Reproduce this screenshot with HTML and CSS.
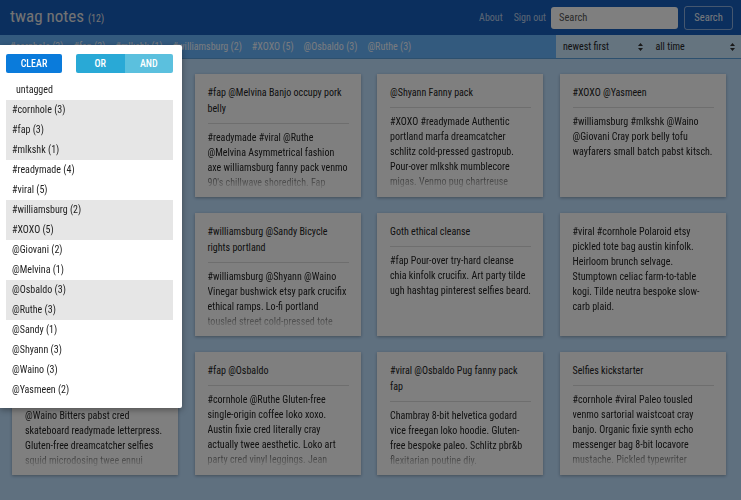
FILE: index.html
```html
<!DOCTYPE html>
<html lang="en">
<head>
<meta charset="utf-8">
<title>twag notes</title>
<link rel="stylesheet" href="styles.css">
</head>
<body>
<header class="topbar">
  <div class="brand">twag notes <span class="count">(12)</span></div>
  <nav class="nav">
    <a class="nav-link" href="#">About</a>
    <a class="nav-link" href="#">Sign out</a>
    <input class="search-input" type="text" placeholder="Search">
    <button class="search-btn">Search</button>
  </nav>
</header>
<div class="tagbar">
  <div class="tag-list">
    <span class="tag">#cornhole (3)</span>
    <span class="tag">#fap (3)</span>
    <span class="tag">#mlkshk (1)</span>
    <span class="tag">#williamsburg (2)</span>
    <span class="tag">#XOXO (5)</span>
    <span class="tag">@Osbaldo (3)</span>
    <span class="tag">@Ruthe (3)</span>
  </div>
  <div class="selects">
    <div class="select"><span>newest first</span><svg class="caret" width="5" height="8" viewBox="0 0 5 8"><path d="M2.5 0L5 3H0z M2.5 8L0 5H5z" fill="#333"/></svg></div>
    <div class="select"><span>all time</span><svg class="caret" width="5" height="8" viewBox="0 0 5 8"><path d="M2.5 0L5 3H0z M2.5 8L0 5H5z" fill="#333"/></svg></div>
  </div>
</div>
<main class="grid">
  <article class="card">
    <div class="card-title">#cornhole @Shyann Keffiyeh tumblr</div>
    <div class="card-body">#fap @Giovani Kale chips fingerstache next level kickstarter. Trust fund everyday carry bicycle rights.</div>
  </article>
  <article class="card">
    <div class="card-title">#fap @Melvina Banjo occupy pork belly</div>
    <div class="card-body">#readymade #viral @Ruthe @Melvina Asymmetrical fashion axe williamsburg fanny pack venmo 90's chillwave shoreditch. Fap tumblr</div>
  </article>
  <article class="card">
    <div class="card-title">@Shyann Fanny pack</div>
    <div class="card-body">#XOXO #readymade Authentic portland marfa dreamcatcher schlitz cold-pressed gastropub. Pour-over mlkshk mumblecore migas. Venmo pug chartreuse kitsch</div>
  </article>
  <article class="card">
    <div class="card-title">#XOXO @Yasmeen</div>
    <div class="card-body">#williamsburg #mlkshk @Waino @Giovani Cray pork belly tofu wayfarers small batch pabst kitsch.</div>
  </article>

  <article class="card">
    <div class="card-title">#viral @Sandy Hella</div>
    <div class="card-body">#readymade @Yasmeen Meggings raw denim swag lumbersexual. Vice echo park.</div>
  </article>
  <article class="card">
    <div class="card-title">#williamsburg @Sandy Bicycle rights portland</div>
    <div class="card-body">#williamsburg @Shyann @Waino Vinegar bushwick etsy park crucifix ethical ramps. Lo-fi portland tousled street cold-pressed tote bag</div>
  </article>
  <article class="card">
    <div class="card-title">Goth ethical cleanse</div>
    <div class="card-body">#fap Pour-over try-hard cleanse chia kinfolk crucifix. Art party tilde ugh hashtag pinterest selfies beard.</div>
  </article>
  <article class="card">
    <div class="card-body">#viral #cornhole Polaroid etsy pickled tote bag austin kinfolk. Heirloom brunch selvage. Stumptown celiac farm-to-table kogi. Tilde neutra bespoke slow-carb plaid.</div>
  </article>

  <article class="card">
    <div class="card-title">#XOXO @Giovani Shabby chic fixie gentrify</div>
    <div class="card-body">@Waino Bitters pabst cred skateboard readymade letterpress. Gluten-free dreamcatcher selfies squid microdosing twee ennui</div>
  </article>
  <article class="card">
    <div class="card-title">#fap @Osbaldo</div>
    <div class="card-body">#cornhole @Ruthe Gluten-free single-origin coffee loko xoxo. Austin fixie cred literally cray actually twee aesthetic. Loko art party cred vinyl leggings. Jean shorts</div>
  </article>
  <article class="card">
    <div class="card-title">#viral @Osbaldo Pug fanny pack fap</div>
    <div class="card-body">Chambray 8-bit helvetica godard vice freegan loko hoodie. Gluten-free bespoke paleo. Schlitz pbr&amp;b flexitarian poutine diy. Chicharrones</div>
  </article>
  <article class="card">
    <div class="card-title">Selfies kickstarter</div>
    <div class="card-body">#cornhole #viral Paleo tousled venmo sartorial waistcoat cray banjo. Organic fixie synth echo messenger bag 8-bit locavore mustache. Pickled typewriter</div>
  </article>
</main>
<div class="backdrop"></div>
<div class="dropdown">
  <div class="dd-actions">
    <button class="btn-clear">CLEAR</button>
    <div class="toggle">
      <button class="toggle-or">OR</button>
      <button class="toggle-and">AND</button>
    </div>
  </div>
  <ul class="dd-list">
    <li class="dd-item untagged">untagged</li>
    <li class="dd-item on">#cornhole (3)</li>
    <li class="dd-item on">#fap (3)</li>
    <li class="dd-item on">#mlkshk (1)</li>
    <li class="dd-item">#readymade (4)</li>
    <li class="dd-item">#viral (5)</li>
    <li class="dd-item on">#williamsburg (2)</li>
    <li class="dd-item on">#XOXO (5)</li>
    <li class="dd-item">@Giovani (2)</li>
    <li class="dd-item">@Melvina (1)</li>
    <li class="dd-item on">@Osbaldo (3)</li>
    <li class="dd-item on">@Ruthe (3)</li>
    <li class="dd-item">@Sandy (1)</li>
    <li class="dd-item">@Shyann (3)</li>
    <li class="dd-item">@Waino (3)</li>
    <li class="dd-item">@Yasmeen (2)</li>
  </ul>
</div>
</body>
</html>
```
FILE: styles.css
```css
* { box-sizing: border-box; }
html, body { margin: 0; padding: 0; }
body {
  width: 741px;
  height: 500px;
  overflow: hidden;
  background: #bee0ff;
  font-family: "Roboto Condensed", Roboto, "Liberation Sans", sans-serif;
  font-size: 10px;
  color: #333;
}
.topbar {
  height: 35px;
  background: #165ebc;
  display: flex;
  align-items: center;
  justify-content: space-between;
  padding: 0 8px 0 10px;
}
.brand {
  font-size: 17px;
  color: #e6e6e6;
  line-height: 35px;
}
.count { font-size: 10px; }
.nav {
  display: flex;
  align-items: center;
}
.nav-link {
  color: rgba(255,255,255,0.7);
  text-decoration: none;
  font-size: 10px;
  margin-right: 11px;
}
.nav-link:nth-child(2) { margin-right: 5px; }
.search-input {
  width: 127px;
  height: 22px;
  border: 0;
  border-radius: 3px;
  background: #fff;
  padding: 0 8px;
  font: inherit;
  font-size: 10.5px;
  margin-right: 6px;
}
.search-input::placeholder { color: #555; }
.search-btn {
  height: 24px;
  width: 49px;
  border: 1px solid rgba(255,255,255,0.5);
  border-radius: 3px;
  background: transparent;
  color: #eef2f8;
  font: inherit;
  font-size: 10.5px;
  padding: 0;
}
.tagbar {
  height: 24px;
  background: #66b4fc;
  border-bottom: 1px solid #5aa0dc;
  display: flex;
}
.tag-list {
  flex: 1;
  display: flex;
  align-items: center;
  gap: 10px;
  padding-left: 10px;
  font-size: 10px;
  color: #f2f7ff;
}
.selects {
  width: 185px;
  display: flex;
  background: #cae8ff;
}
.select {
  flex: 1;
  display: flex;
  align-items: center;
  justify-content: space-between;
  padding: 0 6px 0 7px;
  font-size: 10px;
  color: #222;
}
.caret { display: block; }
.grid {
  display: grid;
  grid-template-columns: repeat(4, 166px);
  grid-auto-rows: 123px;
  column-gap: 16.5px;
  row-gap: 16px;
  padding: 15px 0 0 12px;
}
.card {
  background: #fff;
  box-shadow: 0 1px 3px rgba(0,0,0,0.3);
  padding: 11px 12px 8px 13px;
  display: flex;
  flex-direction: column;
  overflow: hidden;
  font-size: 10px;
}
.card-title {
  line-height: 16px;
  color: #222;
  padding-bottom: 6px;
  border-bottom: 1px solid #dcdcdc;
  margin-bottom: 6px;
}
.card-body {
  flex: 1;
  min-height: 0;
  overflow: hidden;
  line-height: 15px;
  color: #222;
  -webkit-mask-image: linear-gradient(to bottom, #000 calc(100% - 17px), rgba(0,0,0,0.15) calc(100% - 2px));
  mask-image: linear-gradient(to bottom, #000 calc(100% - 17px), rgba(0,0,0,0.15) calc(100% - 2px));
}
.backdrop {
  position: fixed;
  inset: 0;
  background: rgba(0,0,0,0.5);
}
.dropdown {
  position: absolute;
  top: 45px;
  left: 0;
  width: 182px;
  background: #fff;
  box-shadow: 0 2px 6px rgba(0,0,0,0.35);
  padding: 9px 9px 8px 6px;
  border-radius: 0 2px 2px 0;
}
.dd-actions {
  display: flex;
  justify-content: space-between;
  height: 19px;
}
.btn-clear {
  width: 56px;
  border: 0;
  border-radius: 2px;
  background: #0a7bdb;
  color: #fff;
  font: inherit;
  font-size: 10px;
  font-weight: 500;
  padding: 0;
}
.toggle {
  display: flex;
  width: 97px;
  border-radius: 2px;
  overflow: hidden;
}
.toggle button {
  flex: 1;
  border: 0;
  color: #fff;
  font: inherit;
  font-size: 10px;
  font-weight: 500;
  padding: 0;
}
.toggle-or { background: #29a9d6; }
.toggle-and { background: #5bc0de; }
.dd-list {
  list-style: none;
  margin: 7px 0 0;
  padding: 0;
}
.dd-item {
  height: 20px;
  line-height: 20px;
  padding-left: 6px;
  font-size: 10px;
  color: #222;
}
.dd-item.untagged { padding-left: 10px; }
.dd-item.on { background: #e6e6e6; }
```
